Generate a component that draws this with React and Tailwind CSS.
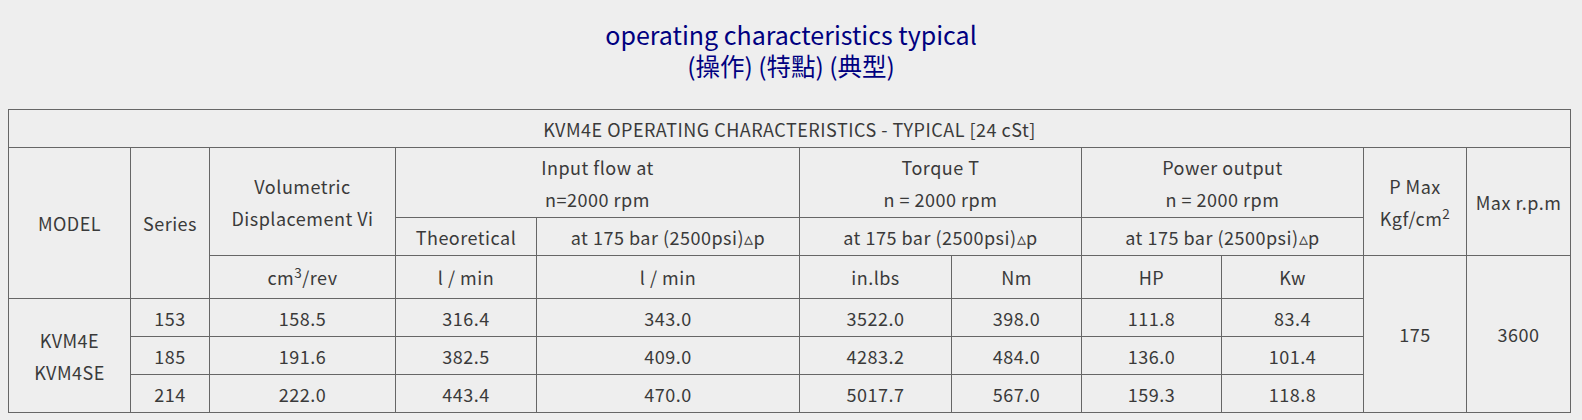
const rows = [
  { series: '153', vol: '158.5', theo: '316.4', flow: '343.0', inlbs: '3522.0', nm: '398.0', hp: '111.8', kw: '83.4' },
  { series: '185', vol: '191.6', theo: '382.5', flow: '409.0', inlbs: '4283.2', nm: '484.0', hp: '136.0', kw: '101.4' },
  { series: '214', vol: '222.0', theo: '443.4', flow: '470.0', inlbs: '5017.7', nm: '567.0', hp: '159.3', kw: '118.8' },
];

const td = 'border border-[#666] text-center align-middle p-0';

export default function App() {
  return (
    <div className="min-h-screen bg-[#eeeeee] pt-[19px] font-['Noto_Sans_CJK_TC',sans-serif] text-[#3a3a3a]">
      {/* Heading */}
      <div className="text-center leading-[31px] text-[#000080]">
        <div className="text-[25px]">operating characteristics typical</div>
        <div className="text-[24.5px]">(操作) (特點) (典型)</div>
      </div>

      {/* Characteristics table */}
      <table className="mt-[28px] ml-[8px] w-[1563px] table-fixed border-collapse text-[18px] leading-[32px] tracking-[0.5px]">
        <colgroup>
          <col className="w-[122px]" />
          <col className="w-[79px]" />
          <col className="w-[186px]" />
          <col className="w-[141px]" />
          <col className="w-[263px]" />
          <col className="w-[152px]" />
          <col className="w-[130px]" />
          <col className="w-[140px]" />
          <col className="w-[142px]" />
          <col className="w-[103px]" />
          <col className="w-[104px]" />
        </colgroup>
        <tbody>
          <tr className="h-[38px]">
            <td colSpan={11} className={td}>
              KVM4E OPERATING CHARACTERISTICS - TYPICAL [24 cSt]
            </td>
          </tr>
          <tr className="h-[70px]">
            <td rowSpan={3} className={td}>MODEL</td>
            <td rowSpan={3} className={td}>Series</td>
            <td rowSpan={2} className={td}>
              Volumetric
              <br />
              Displacement Vi
            </td>
            <td colSpan={2} className={td}>
              Input flow at
              <br />
              n=2000 rpm
            </td>
            <td colSpan={2} className={td}>
              Torque T
              <br />
              n = 2000 rpm
            </td>
            <td colSpan={2} className={td}>
              Power output
              <br />
              n = 2000 rpm
            </td>
            <td rowSpan={2} className={td}>
              P Max
              <br />
              Kgf/cm<sup>2</sup>
            </td>
            <td rowSpan={2} className={td}>Max r.p.m</td>
          </tr>
          <tr className="h-[38px]">
            <td className={td}>Theoretical</td>
            <td className={td}>at 175 bar (2500psi)▵p</td>
            <td colSpan={2} className={td}>at 175 bar (2500psi)▵p</td>
            <td colSpan={2} className={td}>at 175 bar (2500psi)▵p</td>
          </tr>
          <tr className="h-[43px]">
            <td className={td}>
              cm<sup>3</sup>/rev
            </td>
            <td className={td}>l / min</td>
            <td className={td}>l / min</td>
            <td className={td}>in.lbs</td>
            <td className={td}>Nm</td>
            <td className={td}>HP</td>
            <td className={td}>Kw</td>
            <td rowSpan={4} className={td}>175</td>
            <td rowSpan={4} className={td}>3600</td>
          </tr>
          {rows.map((r, i) => (
            <tr key={r.series} className="h-[38px]">
              {i === 0 && (
                <td rowSpan={3} className={td}>
                  KVM4E
                  <br />
                  KVM4SE
                </td>
              )}
              <td className={td}>{r.series}</td>
              <td className={td}>{r.vol}</td>
              <td className={td}>{r.theo}</td>
              <td className={td}>{r.flow}</td>
              <td className={td}>{r.inlbs}</td>
              <td className={td}>{r.nm}</td>
              <td className={td}>{r.hp}</td>
              <td className={td}>{r.kw}</td>
            </tr>
          ))}
        </tbody>
      </table>
    </div>
  );
}
